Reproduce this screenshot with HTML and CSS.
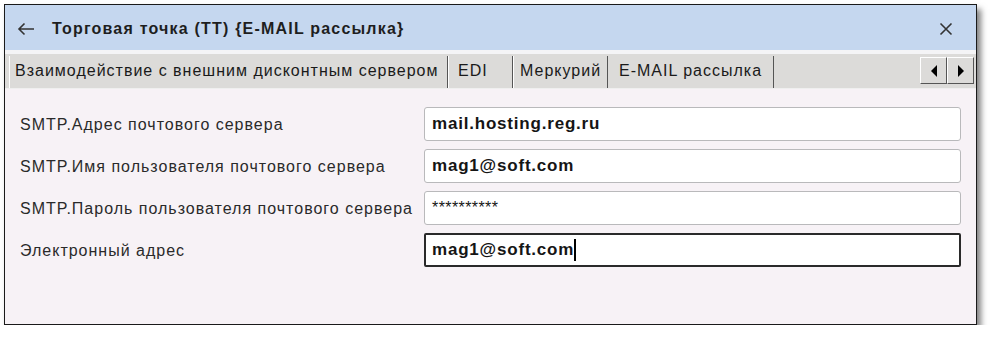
FILE: index.html
```html
<!DOCTYPE html>
<html>
<head>
<meta charset="utf-8">
<link rel="stylesheet" href="styles.css">
</head>
<body>
<div class="window">
  <div class="titlebar">
    <svg class="back" width="18" height="14" viewBox="0 0 18 14"><path d="M17 7H2M7.5 1.5L2 7l5.5 5.5" fill="none" stroke="#333" stroke-width="1.6"/></svg>
    <div class="title">Торговая точка (ТТ) {E-MAIL рассылка}</div>
    <svg class="close" width="14" height="14" viewBox="0 0 14 14"><path d="M1.5 1.5l11 11M12.5 1.5l-11 11" stroke="#333" stroke-width="1.6"/></svg>
  </div>
  <div class="gap"></div>
  <div class="tabstrip">
    <div class="tab first">Взаимодействие с внешним дисконтным сервером</div>
    <div class="tab edi">EDI</div>
    <div class="tab merc">Меркурий</div>
    <div class="tab active">E-MAIL рассылка</div>
    <div class="spacer"></div>
    <div class="scroll">
      <div class="sbtn"><span class="tri left"></span></div>
      <div class="sbtn"><span class="tri right"></span></div>
    </div>
  </div>
  <div class="content">
    <div class="row">
      <div class="label">SMTP.Адрес почтового сервера</div>
      <div class="field">mail.hosting.reg.ru</div>
    </div>
    <div class="row">
      <div class="label">SMTP.Имя пользователя почтового сервера</div>
      <div class="field">mag1@soft.com</div>
    </div>
    <div class="row">
      <div class="label">SMTP.Пароль пользователя почтового сервера</div>
      <div class="field pass">**********</div>
    </div>
    <div class="row">
      <div class="label">Электронный адрес</div>
      <div class="field focus">mag1@soft.com<span class="caret"></span></div>
    </div>
  </div>
</div>
</body>
</html>
```
FILE: styles.css
```css
html, body { margin: 0; padding: 0; background: #ffffff; }
body { font-family: "Liberation Sans", Arial, sans-serif; color: #222; }

.window {
  margin: 4px 0 0 4px;
  width: 971px;
  height: 319px;
  border: 1px solid #1a1a1a;
  background: #f7f2f6;
  box-shadow: 4px 5px 6px rgba(0,0,0,0.5);
  display: flex;
  flex-direction: column;
}

.titlebar {
  height: 45px;
  background: #c5d7ef;
  display: flex;
  align-items: center;
  padding: 0 0 0 12px;
  flex: none;
}
.back { margin-right: 17px; margin-top: 2px; }
.title {
  font-weight: bold;
  font-size: 16px;
  letter-spacing: 1.2px;
  color: #1e1e1e;
  flex: 1;
  margin-top: 3px;
}
.close { margin-right: 23px; margin-top: 2px; }

.gap { height: 4px; background: #f4f4f6; flex: none; }

.tabstrip {
  height: 34px;
  background: #dcdbd9;
  display: flex;
  align-items: stretch;
  flex: none;
  padding-left: 4px;
  border-bottom: 1px solid #efefef;
}
.tab {
  box-sizing: border-box;
  font-size: 16px;
  letter-spacing: 1px;
  color: #1a1a1a;
  display: flex;
  align-items: center;
  padding: 0 0 2px 6px;
  border-left: 1px solid #ffffff;
  border-right: 1px solid #555;
  margin-top: 2px;
  white-space: nowrap;
  overflow: hidden;
}
.tab.first { width: 439px; padding-left: 5px; }
.tab.edi { width: 65px; padding-left: 9px; }
.tab.merc { width: 95px; padding-left: 6px; }
.tab.active { width: 166px; border-left: none; padding-left: 11px; }
.spacer { flex: 1; }
.scroll {
  display: flex;
  margin: 3px 2px 4px 0;
}
.sbtn {
  width: 25px;
  background: #dcdbd9;
  border-top: 1px solid #fff;
  border-left: 1px solid #fff;
  border-right: 1px solid #555;
  border-bottom: 1px solid #555;
  display: flex;
  align-items: center;
  justify-content: center;
}
.tri { width: 0; height: 0; border-top: 6px solid transparent; border-bottom: 6px solid transparent; }
.tri.left { border-right: 6px solid #000; }
.tri.right { border-left: 6px solid #000; }

.content {
  flex: 1;
  padding: 18px 15px 0 15px;
  display: flex;
  flex-direction: column;
  gap: 8px;
}
.row {
  display: flex;
  align-items: center;
  height: 34px;
}
.label {
  width: 404px;
  font-size: 16px;
  letter-spacing: 1px;
  color: #2a2a2a;
  padding-top: 2px;
  white-space: nowrap;
}
.field {
  flex: 1;
  height: 34px;
  box-sizing: border-box;
  background: #fff;
  border: 1px solid #b9b9bb;
  border-radius: 3px;
  padding: 0 7px;
  font-weight: bold;
  font-size: 17px;
  letter-spacing: 0.8px;
  color: #151515;
  display: flex;
  align-items: center;
}
.field.pass {
  font-size: 16px;
  align-items: flex-start;
  padding-top: 7px;
  letter-spacing: 0.4px;
  font-weight: normal;
  line-height: 18px;
}
.field.focus {
  border: 2px solid #2a2a2a;
  border-radius: 2px;
  padding-left: 6px;
}
.caret {
  display: inline-block;
  width: 2px;
  height: 22px;
  background: #000;
  margin-left: 0;
}
```
